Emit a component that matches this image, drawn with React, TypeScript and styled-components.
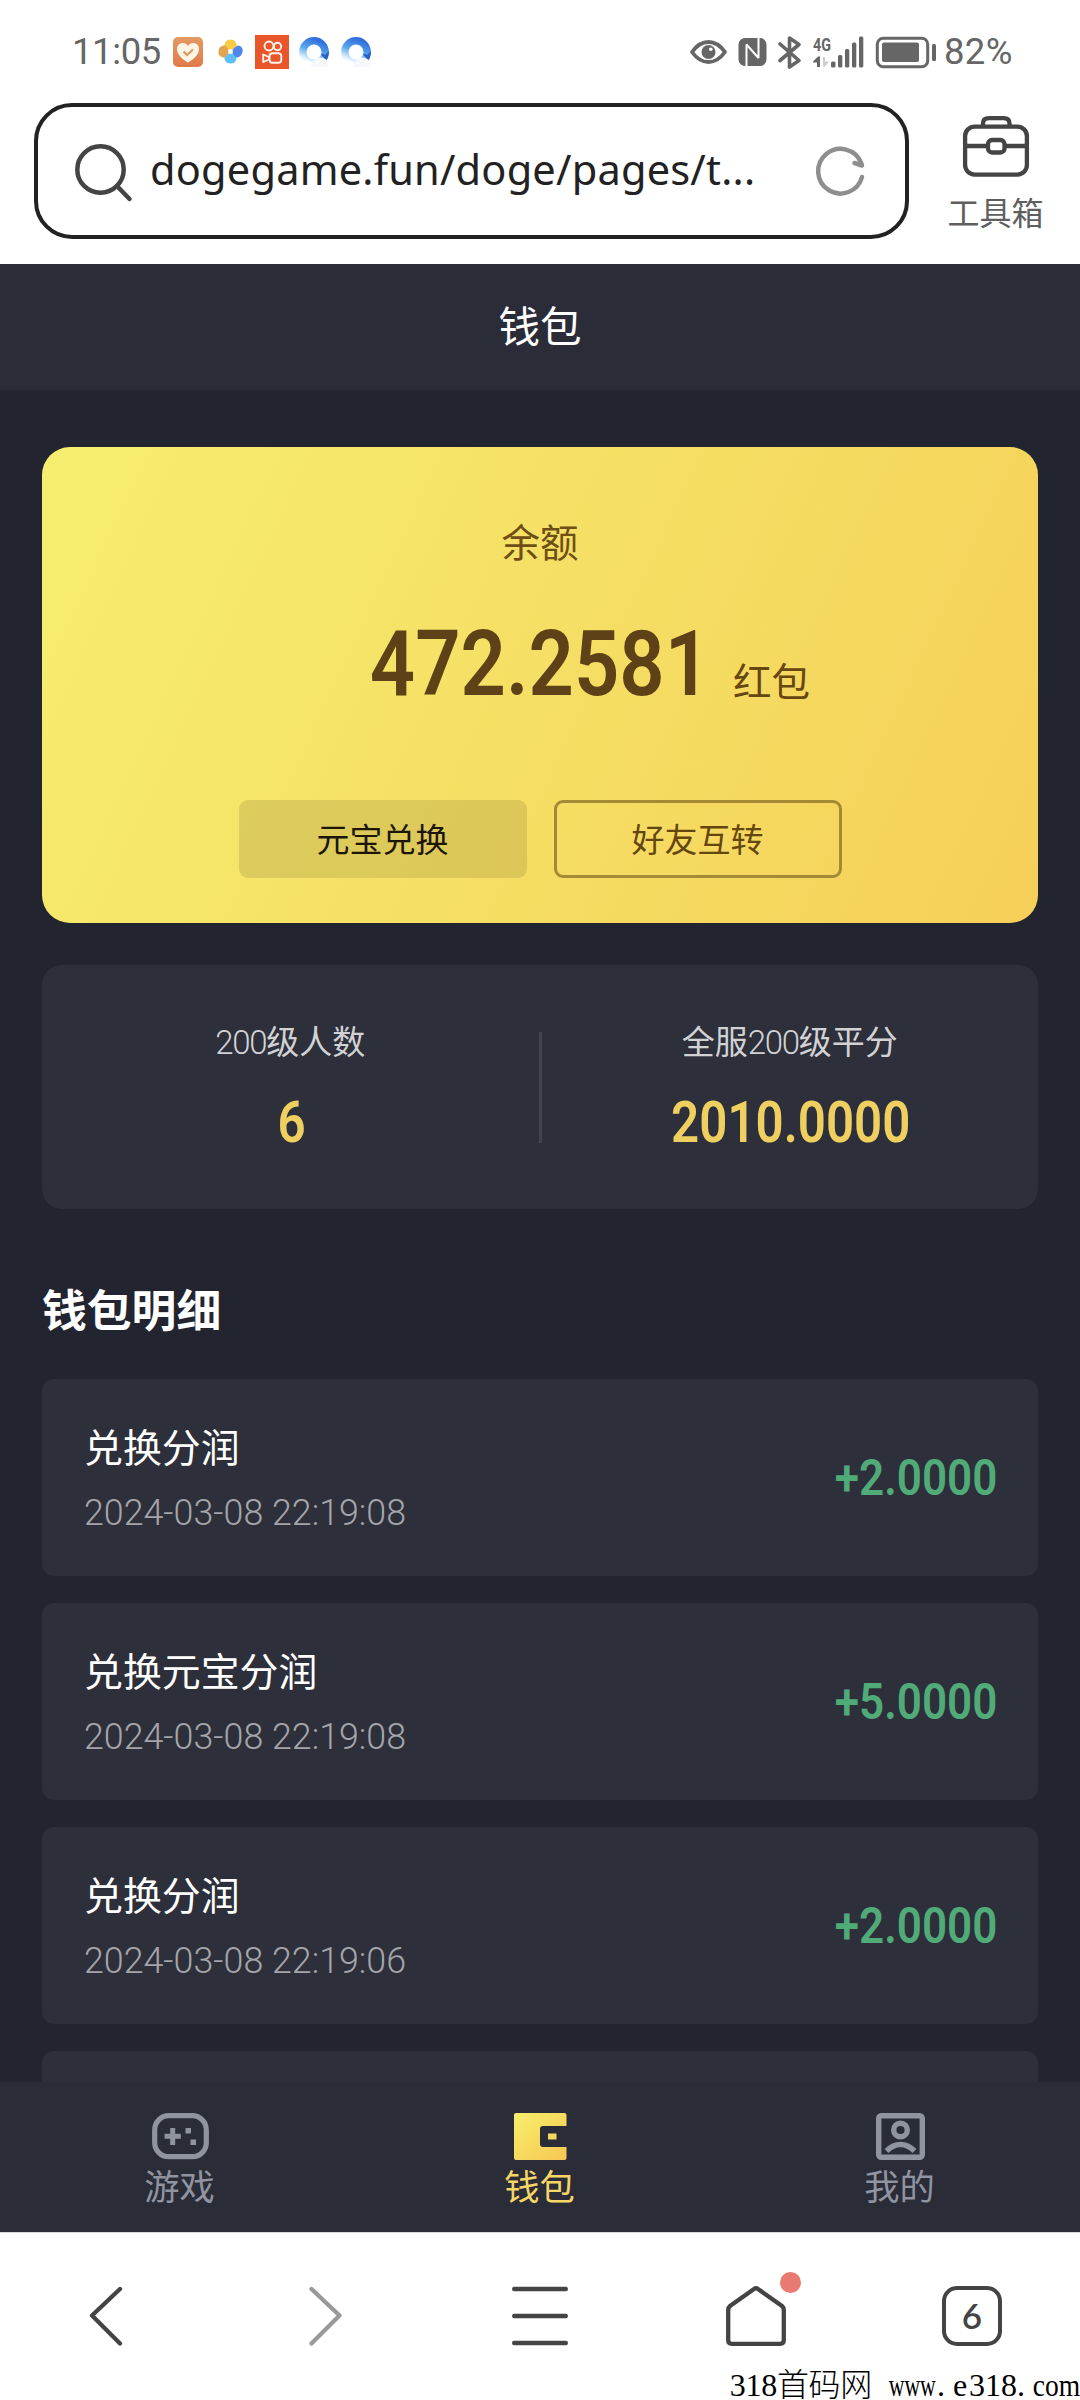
import React from "react";
import styled, { createGlobalStyle } from "styled-components";

const GlobalStyle = createGlobalStyle`
  *, *::before, *::after { box-sizing: border-box; }
  body { margin: 0; background: #fff; }
  svg { display: block; flex: none; overflow: visible; }
`;

const cjk = `"Noto Sans CJK SC", sans-serif`;
const latin = `Roboto, "Noto Sans CJK SC", sans-serif`;

const Screen = styled.div`
  position: relative;
  display: flex;
  flex-direction: column;
  width: 1080px;
  height: 2400px;
  overflow: hidden;
  background: #fff;
  font-family: ${cjk};
`;

/* System status bar */
const StatusBar = styled.div`
  display: flex;
  align-items: center;
  justify-content: space-between;
  height: 103px;
  padding: 0 67px 0 72px;
`;
const StatusGroup = styled.div`
  display: flex;
  align-items: center;
`;
const StatusText = styled.span<{ $width: number; $spacing?: number }>`
  width: ${(p) => p.$width}px;
  font: 400 36.5px/40px ${latin};
  letter-spacing: ${(p) => p.$spacing ?? 0}px;
  color: #666;
  white-space: nowrap;
`;

/* Browser address row */
const AddressRow = styled.div`
  display: flex;
  height: 161px;
  padding-left: 34px;
`;
const AddressBox = styled.div`
  display: flex;
  flex: none;
  align-items: center;
  width: 875px;
  height: 136px;
  padding: 0 41px 0 37px;
  border: 4.5px solid #222;
  border-radius: 38px;
`;
const Url = styled.span`
  flex: 1;
  margin: -5px 0 0 17px;
  font: 400 41.5px/56px "Noto Sans", sans-serif;
  letter-spacing: 0.22px;
  color: #222;
  white-space: nowrap;
`;
const Toolbox = styled.div`
  display: flex;
  flex-direction: column;
  align-items: center;
  flex: 1;
  padding: 13px 0 0 2px;
`;
const ToolboxLabel = styled.span`
  margin-top: 12px;
  font: 400 32px/44px ${cjk};
  color: #5e5e5e;
`;

/* Wallet page */
const Page = styled.main`
  display: flex;
  flex-direction: column;
  flex: 1;
  min-height: 0;
  background: #22242f;
`;
const PageHeader = styled.header`
  flex: none;
  height: 126px;
  background: #2a2c37;
  color: #fff;
  font: 400 41.5px/121px ${cjk};
  text-align: center;
`;
const Content = styled.div`
  flex: 1;
  min-height: 0;
  overflow: hidden;
  padding: 57px 42px 0;
`;
const BalanceCard = styled.section`
  display: flex;
  flex-direction: column;
  align-items: center;
  height: 476px;
  padding-top: 71px;
  border-radius: 28px;
  background: linear-gradient(115deg, #f6ee70 0%, #f5df64 50%, #f6cf59 100%);
  color: #5e4314;
`;
const BalanceLabel = styled.div`
  font: 400 38.5px/44px ${cjk};
  color: #6e4f15;
`;
const BalanceRow = styled.div`
  display: flex;
  align-items: flex-end;
  width: 100%;
  height: 92px;
  margin-top: 56px;
  padding-left: 332px;
`;
const NumberBox = styled.div<{ $width: number }>`
  display: flex;
  justify-content: center;
  width: ${(p) => p.$width}px;
`;
const Figure = styled.span<{
  $size: number;
  $line: number;
  $weight: number;
  $scale: number;
  $color: string;
  $origin?: string;
}>`
  display: block;
  flex: none;
  font: ${(p) => p.$weight} ${(p) => p.$size}px/${(p) => p.$line}px ${latin};
  color: ${(p) => p.$color};
  transform: scaleX(${(p) => p.$scale});
  transform-origin: ${(p) => p.$origin ?? "center"};
  white-space: nowrap;
`;
const Unit = styled.span`
  margin: 0 0 9px 27px;
  font: 400 38.5px/44px ${cjk};
  color: #66470f;
`;
const ButtonRow = styled.div`
  display: flex;
  gap: 27px;
  margin-top: 90px;
`;
const CardButton = styled.button<{ $outlined?: boolean }>`
  width: 288px;
  height: 78px;
  padding: 0 0 3px;
  border: ${(p) => (p.$outlined ? "3px solid #a48a35" : "0")};
  border-radius: 9px;
  background: ${(p) => (p.$outlined ? "transparent" : "rgba(0, 0, 0, 0.1)")};
  color: ${(p) => (p.$outlined ? "#64460f" : "#1c1606")};
  font: 400 33px/40px ${cjk};
`;

const StatsCard = styled.section`
  display: flex;
  align-items: center;
  height: 244px;
  margin-top: 42px;
  border-radius: 20px;
  background: #2d2f3a;
`;
const Stat = styled.div`
  display: flex;
  flex: 1;
  flex-direction: column;
  align-items: center;
  align-self: stretch;
  padding: 55px 0 0 2px;
`;
const StatLabel = styled.div`
  margin: 0 2px 31px 0;
  font: 400 33px/40px ${cjk};
  color: #d2d2d5;
`;
const LabelDigits = styled.span`
  font-family: ${latin};
  font-weight: 350;
  letter-spacing: -1.3px;
`;
const Divider = styled.div`
  width: 3px;
  height: 111px;
  background: #42434d;
`;

const SectionTitle = styled.h2`
  margin: 69px 0 41px;
  font: 700 44.8px/60px ${cjk};
  color: #fff;
`;
const List = styled.div`
  display: flex;
  flex-direction: column;
  gap: 27px;
`;
const Item = styled.article`
  display: flex;
  flex: none;
  align-items: center;
  justify-content: space-between;
  height: 197px;
  padding: 0 41px 0 42px;
  border-radius: 12px;
  background: #2d2f3a;
`;
const ItemBody = styled.div`
  display: flex;
  flex-direction: column;
  gap: 25px;
  margin-top: -1px;
`;
const ItemTitle = styled.div`
  font: 400 38.9px/46px ${cjk};
  color: #fff;
`;

const TabBar = styled.nav`
  display: grid;
  grid-template-columns: repeat(3, 1fr);
  flex: none;
  height: 150px;
  background: #2a2c37;
`;
const Tab = styled.div<{ $active?: boolean }>`
  display: flex;
  flex-direction: column;
  align-items: center;
  padding: 31px 1px 0 0;
  font: 400 35.3px/44px ${cjk};
  color: ${(p) => (p.$active ? "#f5d565" : "#9093a0")};
  & > svg { margin: 0 0 3px 1px; }
`;

/* Browser toolbar */
const BrowserBar = styled.footer`
  display: grid;
  grid-template-columns: repeat(5, 1fr);
  justify-items: center;
  height: 168px;
  padding-top: 53px;
  border-top: 1px solid #d9d9d9;
`;
const HomeButton = styled.div`
  position: relative;
  width: 60px;
  height: 60px;
`;
const Dot = styled.span`
  position: absolute;
  top: -14px;
  right: -15px;
  width: 21px;
  height: 21px;
  border-radius: 50%;
  background: #e87a72;
`;
const TabCount = styled.div`
  width: 60px;
  height: 60px;
  border: 4px solid #444;
  border-radius: 15px;
  color: #444;
  font: 600 35px/50px Lato, sans-serif;
  text-align: center;
`;
const Watermark = styled.div`
  position: absolute;
  right: 0;
  bottom: 0;
  display: flex;
  font: 400 32px/29px "Liberation Serif", "Noto Sans CJK SC", serif;
  color: #000;
  white-space: pre;
`;
const SiteName = styled.span`
  margin-right: 16px;
  font-weight: 300;
  letter-spacing: -0.3px;
`;
/* Half-width cells, 16px per character */
const Cells = styled.span<{ $count: number; $scale?: number }>`
  width: ${(p) => p.$count * 16}px;
  padding-left: 1px;
  transform: scaleX(${(p) => p.$scale ?? 1});
  transform-origin: left;
`;

const HeartApp = () => (
  <svg width="30" height="30" viewBox="0 0 30 30" style={{ marginLeft: 10 }}>
    <defs>
      <linearGradient id="heart" x1="0" y1="0" x2="0" y2="1">
        <stop offset="0" stopColor="#e59a63" />
        <stop offset="1" stopColor="#e07a49" />
      </linearGradient>
    </defs>
    <rect width="30" height="30" rx="5" fill="url(#heart)" />
    <path d="M15 25.5C9 22 4 17.500 4 12C4 8.500 6.500 6 9.700 6C12 6 14 7.200 15 9C16 7.200 18 6 20.300 6C23.500 6 26 8.500 26 12C26 17.500 21 22 15 25.500Z" fill="#fdf3e6" />
    <path d="M10.500 14.500L14 18L20 12.500" fill="none" stroke="#dd9b62" strokeWidth="2.200" />
  </svg>
);

const Pinwheel = () => (
  <svg width="25" height="25" viewBox="0 0 25 25" style={{ margin: "0 12px 0 15px" }}>
    <path d="M6.500 8C6 3.500 8.500 .5 12.500 .5C17 .5 19 4 18.500 8L14.500 10.500H10Z" fill="#f6cc45" />
    <path d="M14.500 10.500L19 6.800C22.500 6 24.900 8.500 24.700 11.500C24.500 16.500 21 19 17 18.500L14.500 15Z" fill="#4e86ea" />
    <path d="M14.500 14.500L18.500 19C18 23 16 24.700 12.500 24.500C8 24.500 6 21 6.500 17.500L10.500 14.500Z" fill="#5fc0f8" />
    <path d="M10.500 14.500L6.500 18.500C2.500 18.500 .3 16 .5 12.500C.5 8 4 6 7.500 6.500L10.500 10.500Z" fill="#e3a44f" />
    <rect x="10.500" y="10.500" width="4" height="4" fill="#fff" />
  </svg>
);

const Camera = () => (
  <svg width="34" height="34" viewBox="0 0 34 34">
    <rect width="34" height="34" fill="#e9562b" />
    <g fill="none" stroke="#fff3ea" strokeWidth="1.900">
      <circle cx="14" cy="11" r="4.500" />
      <circle cx="22.500" cy="11.500" r="3.700" />
      <rect x="14.500" y="18.200" width="11.800" height="9.600" rx="3" />
      <path d="M8.200 19.500V27L14 24.500V22Z" strokeLinejoin="round" />
    </g>
  </svg>
);

const QBrowser = ({ id, gap }: { id: string; gap: number }) => (
  <svg width="30" height="30" viewBox="0 0 30 30" style={{ marginLeft: gap }}>
    <defs>
      <linearGradient id={id} x1=".75" y1="0" x2=".35" y2="1">
        <stop offset="0" stopColor="#326fdd" />
        <stop offset=".5" stopColor="#5aa9f0" />
        <stop offset=".82" stopColor="#cde6fa" />
        <stop offset="1" stopColor="#fff" />
      </linearGradient>
    </defs>
    <circle cx="15" cy="15" r="11.200" fill="none" stroke={`url(#${id})`} strokeWidth="7.400" />
    <path d="M30 14C30 18 29 21 27.500 23.500L22 17.500C23 16.500 25 17 26 18Z" fill="#2c5fc4" />
    <path d="M12 30C13.500 22 20 17 28.500 23.500L29 30Z" fill="#f6f8fc" />
  </svg>
);

const SystemIcons = () => (
  <svg width="246" height="34" viewBox="690 35 246 34" fill="#666" style={{ marginRight: 8 }}>
    <path d="M692 52C697 45 702 42 708.500 42S720 45 725 52C720 59 715 62 708.500 62S697 59 692 52Z" fill="none" stroke="#666" strokeWidth="3.800" strokeLinejoin="round" />
    <circle cx="708.500" cy="52" r="7" />
    <circle cx="710.800" cy="49.300" r="1.800" fill="#fff" />
    <rect x="738.500" y="38" width="28" height="28" rx="6.500" />
    <path d="M746.500 66.500V44.500L758.500 58V37.500" fill="none" stroke="#fff" strokeWidth="2" strokeLinejoin="bevel" />
    <path d="M780 44L799 60.500L789.500 67V38L799 44.500L780 60.500" fill="none" stroke="#666" strokeWidth="3.600" strokeLinejoin="round" strokeLinecap="round" />
    <text x="813" y="51" fontFamily="Roboto, sans-serif" fontSize="19" fontWeight="700" textLength="18" lengthAdjust="spacingAndGlyphs">4G</text>
    <path d="M813 61.500L818 56.500H820V67H817V62.500H813Z" />
    <path d="M823 57H825V61.500H829L825 66.500H823Z" fill="#ccc" />
    <rect x="831" y="61.500" width="4.500" height="6" rx="1.500" />
    <rect x="838" y="55" width="4.300" height="12.500" rx="1.500" />
    <rect x="845" y="49" width="4.300" height="18.500" rx="1.500" />
    <rect x="852" y="42.500" width="4.300" height="25" rx="1.500" />
    <rect x="859" y="36.500" width="4.300" height="31" rx="1.500" />
    <rect x="877.300" y="38.300" width="50.400" height="28.400" rx="6" fill="none" stroke="#666" strokeWidth="3" />
    <rect x="882" y="42.500" width="37" height="19.500" rx="2" />
    <rect x="932" y="44" width="4" height="17" rx="1.500" />
  </svg>
);

const SearchIcon = () => (
  <svg width="58" height="58" viewBox="0 0 58 58" fill="none" stroke="#444" strokeWidth="4.500" strokeLinecap="round">
    <circle cx="25.500" cy="27.500" r="23.200" />
    <path d="M42 44L54.500 57" />
  </svg>
);

const ReloadIcon = () => (
  <svg width="48" height="50" viewBox="0 0 48 50" fill="none" stroke="#8e8e8e" strokeWidth="4.500" strokeLinecap="round" strokeLinejoin="round">
    <path d="M46 31A22.300 22.300 0 1 1 45.200 17L46 19.500L38.500 17" />
  </svg>
);

const ToolboxIcon = () => (
  <svg width="66" height="61" viewBox="0 0 66 61" fill="none" stroke="#444" strokeWidth="4.300">
    <rect x="2.100" y="10.600" width="61.800" height="48" rx="9.500" />
    <path d="M20 10V7.500Q20 2.200 26 2.200H40.500Q46.500 2.200 46.500 7.500V10" />
    <path d="M2 30H25M41 30H64" />
    <rect x="25" y="24" width="16.500" height="12.500" rx="4" />
  </svg>
);

const GameIcon = () => (
  <svg width="57" height="47" viewBox="0 0 57 47">
    <rect x="2.700" y="2.700" width="51.600" height="41" rx="14" fill="none" stroke="#9093a0" strokeWidth="5.200" />
    <path d="M18.200 15H23.200V20.800H28.800V25.800H23.200V32H18.200V25.800H12.600V20.800H18.200Z" fill="#9093a0" />
    <path d="M33.500 15H39V20.500H33.500ZM38.500 26.500H44V32H38.500Z" fill="#9093a0" />
  </svg>
);

const WalletIcon = () => (
  <svg width="53" height="47" viewBox="0 0 53 47">
    <defs>
      <linearGradient id="wallet" x1="0" y1="0" x2="1" y2="1">
        <stop offset="0" stopColor="#f7ef6c" />
        <stop offset="1" stopColor="#f6c752" />
      </linearGradient>
    </defs>
    <path d="M2 0H50.500Q52.500 0 52.500 2V13H29Q26 13 26 16V31Q26 34 29 34H52.500V45Q52.500 47 50.500 47H2Q0 47 0 45V2Q0 0 2 0ZM34 20.500H42.500V26.500H34Z" fill="url(#wallet)" />
  </svg>
);

const ProfileIcon = () => (
  <svg width="49" height="47" viewBox="0 0 49 47" fill="none" stroke="#9093a0" strokeWidth="5.400">
    <rect x="2.700" y="2.700" width="43.600" height="41.600" rx="2.500" />
    <circle cx="24.500" cy="17" r="6.800" />
    <path d="M10.500 38Q17 31.500 24.500 31.500T38.500 38" />
  </svg>
);

const ChevronIcon = ({ forward }: { forward?: boolean }) => (
  <svg width="60" height="60" viewBox="0 0 60 60" fill="none" stroke={forward ? "#999" : "#444"} strokeWidth="4.300" strokeLinecap="round" strokeLinejoin="round">
    <path d={forward ? "M17.500 3L45.500 29.500L17.500 57.500" : "M42 3L14 29.500L42 57.500"} />
  </svg>
);

const MenuIcon = () => (
  <svg width="60" height="60" viewBox="0 0 60 60" stroke="#444" strokeWidth="4.600" strokeLinecap="round">
    <path d="M4.300 3H55.700M4.300 30H55.700M4.300 57H55.700" />
  </svg>
);

const HomeIcon = () => (
  <svg width="60" height="60" viewBox="0 0 60 60" fill="none" stroke="#444" strokeWidth="4.300" strokeLinejoin="round">
    <path d="M28 3Q30 1.500 32 3L56 20Q57.800 21.500 57.800 24V54Q57.800 57.800 54 57.800H6Q2.200 57.800 2.200 54V24Q2.200 21.500 4 20Z" />
  </svg>
);

const records = [
  { title: "兑换分润", time: "2024-03-08 22:19:08", amount: "+2.0000" },
  { title: "兑换元宝分润", time: "2024-03-08 22:19:08", amount: "+5.0000" },
  { title: "兑换分润", time: "2024-03-08 22:19:06", amount: "+2.0000" },
];

export default function App() {
  return (
    <Screen>
      <GlobalStyle />
      <StatusBar>
        <StatusGroup>
          <StatusText $width={91} $spacing={-0.4}>11:05</StatusText>
          <HeartApp />
          <Pinwheel />
          <Camera />
          <QBrowser id="q1" gap={10} />
          <QBrowser id="q2" gap={12} />
        </StatusGroup>
        <StatusGroup>
          <SystemIcons />
          <StatusText $width={69} $spacing={0.3}>82%</StatusText>
        </StatusGroup>
      </StatusBar>
      <AddressRow>
        <AddressBox>
          <SearchIcon />
          <Url>dogegame.fun/doge/pages/t...</Url>
          <ReloadIcon />
        </AddressBox>
        <Toolbox>
          <ToolboxIcon />
          <ToolboxLabel>工具箱</ToolboxLabel>
        </Toolbox>
      </AddressRow>

      <Page>
        <PageHeader>钱包</PageHeader>
        <Content>
          <BalanceCard>
            <BalanceLabel>余额</BalanceLabel>
            <BalanceRow>
              <NumberBox $width={332}>
                <Figure $size={91.5} $line={93} $weight={650} $scale={0.868} $color="#5e4116">472.2581</Figure>
              </NumberBox>
              <Unit>红包</Unit>
            </BalanceRow>
            <ButtonRow>
              <CardButton>元宝兑换</CardButton>
              <CardButton $outlined>好友互转</CardButton>
            </ButtonRow>
          </BalanceCard>

          <StatsCard>
            <Stat>
              <StatLabel><LabelDigits>200</LabelDigits>级人数</StatLabel>
              <Figure $size={58} $line={56} $weight={650} $scale={0.85} $color="#efcf60">6</Figure>
            </Stat>
            <Divider />
            <Stat>
              <StatLabel>全服<LabelDigits>200</LabelDigits>级平分</StatLabel>
              <Figure $size={58} $line={56} $weight={650} $scale={0.85} $color="#efcf60">2010.0000</Figure>
            </Stat>
          </StatsCard>

          <SectionTitle>钱包明细</SectionTitle>
          <List>
            {records.map((r, i) => (
              <Item key={i}>
                <ItemBody>
                  <ItemTitle>{r.title}</ItemTitle>
                  <Figure $size={36.5} $line={40} $weight={350} $scale={0.98} $color="#a4a5aa" $origin="left">{r.time}</Figure>
                </ItemBody>
                <Figure $size={50.5} $line={60} $weight={580} $scale={0.872} $color="#50ab79" $origin="right">{r.amount}</Figure>
              </Item>
            ))}
            <Item />
          </List>
        </Content>
        <TabBar>
          <Tab><GameIcon />游戏</Tab>
          <Tab $active><WalletIcon />钱包</Tab>
          <Tab><ProfileIcon />我的</Tab>
        </TabBar>
      </Page>

      <BrowserBar>
        <ChevronIcon />
        <ChevronIcon forward />
        <MenuIcon />
        <HomeButton>
          <HomeIcon />
          <Dot />
        </HomeButton>
        <TabCount>6</TabCount>
      </BrowserBar>
      <Watermark>
        <SiteName>318首码网</SiteName>
        <Cells $count={3} $scale={0.68}>www</Cells>
        <Cells $count={1}>.</Cells>
        <Cells $count={1}>e</Cells>
        <Cells $count={3}>318</Cells>
        <Cells $count={1}>.</Cells>
        <Cells $count={3} $scale={0.86}>com</Cells>
      </Watermark>
    </Screen>
  );
}
